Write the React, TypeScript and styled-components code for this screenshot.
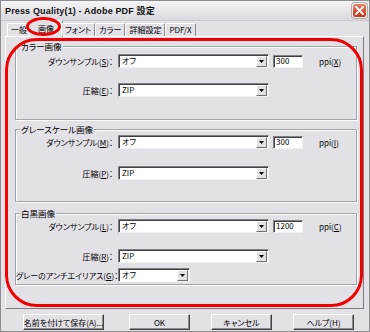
import React from 'react'
import styled, { createGlobalStyle } from 'styled-components'

const GlobalStyle = createGlobalStyle`
  body {
    margin: 0;
    background: #e2e1e6;
  }
`

const uiFont = `"Noto Sans CJK JP", "Noto Sans", sans-serif`

const Window = styled.div`
  position: relative;
  box-sizing: border-box;
  width: 370px;
  height: 332px;
  display: flex;
  flex-direction: column;
  background: #e2e1e6;
  border: 1px solid #8d8c93;
  font-family: ${uiFont};
  font-size: 8px;
  font-feature-settings: 'palt';
  color: #000;
  overflow: hidden;
`

const TitleBar = styled.div`
  height: 19px;
  flex: none;
  display: flex;
  align-items: center;
  justify-content: space-between;
  padding: 0 2px 0 4px;
  background: linear-gradient(#f6f6f8, #e6e6ea 55%, #d8d8de);
  border-bottom: 1px solid #c9c8ce;
`

const Title = styled.span`
  font-family: 'Liberation Sans', 'Noto Sans CJK JP', sans-serif;
  font-weight: bold;
  font-size: 9px;
  letter-spacing: 0.15px;
  color: #111;
`

const CloseButton = styled.div`
  width: 15px;
  height: 15px;
  box-sizing: border-box;
  border: 1px solid #f4f4f4;
  border-radius: 3px;
  background: linear-gradient(#e9876e, #d24d2f 60%, #c13d22);
  display: flex;
  align-items: center;
  justify-content: center;
  box-shadow: 0 0 0 1px #b9a7a3;
`

const TabStrip = styled.div`
  height: 15px;
  flex: none;
  display: flex;
  align-items: flex-end;
  padding-left: 6px;
  position: relative;
  z-index: 1;
`

const Tab = styled.div<{ $active?: boolean }>`
  box-sizing: border-box;
  height: ${({ $active }) => ($active ? '17px' : '13px')};
  margin: ${({ $active }) => ($active ? '0 -2px -1px' : '0')};
  padding: ${({ $active }) => ($active ? '0 8px' : '0 3px')};
  display: flex;
  align-items: center;
  background: #e2e1e6;
  border-top: 1px solid #ffffff;
  border-left: 1px solid #ffffff;
  border-right: 1px solid #8b8a90;
  border-radius: 2px 2px 0 0;
  line-height: 1;
`

const Panel = styled.div`
  margin: 0 5px 0 4px;
  padding: 3px 6px 23px 9px;
  border-top: 1px solid #ffffff;
  border-left: 1px solid #ffffff;
  border-right: 1px solid #7e7d84;
  border-bottom: 1px solid #7e7d84;
  display: flex;
  flex-direction: column;
`

const Group = styled.fieldset<{ $top: number; $bottom: number }>`
  margin: ${({ $top }) => $top}px 0 0;
  padding: 0 0 ${({ $bottom }) => $bottom}px;
  min-width: 0;
  border: 1px solid #a3a2a9;
  box-shadow: 1px 1px 0 #ffffff, inset 1px 1px 0 #ffffff;
`

const Legend = styled.legend`
  margin-left: 4px;
  padding: 0 1px;
  line-height: 12px;
  font-size: 8.5px;
  background: #e2e1e6;
`

const Row = styled.div<{ $top: number }>`
  display: flex;
  align-items: center;
  height: 14px;
  margin-top: ${({ $top }) => $top}px;
`

const Label = styled.span`
  width: 97px;
  flex: none;
  text-align: right;
  white-space: nowrap;
  margin-right: 5px;
`

const Key = styled.span`
  text-decoration: underline;
`

const SelectBox = styled.div<{ $width: number }>`
  box-sizing: border-box;
  width: ${({ $width }) => $width}px;
  height: 14px;
  flex: none;
  display: flex;
  align-items: center;
  background: #ffffff;
  border-top: 1px solid #808086;
  border-left: 1px solid #808086;
  border-right: 1px solid #f2f2f4;
  border-bottom: 1px solid #f2f2f4;
  box-shadow: inset 1px 1px 0 #404044;
`

const SelectText = styled.span`
  flex: 1;
  padding-left: 3px;
  line-height: 1;
`

const DropButton = styled.div`
  box-sizing: border-box;
  width: 11px;
  height: 11px;
  margin-right: 1px;
  display: flex;
  align-items: center;
  justify-content: center;
  background: #e2e1e6;
  border-top: 1px solid #ffffff;
  border-left: 1px solid #ffffff;
  border-right: 1px solid #6f6e74;
  border-bottom: 1px solid #6f6e74;
`

const NumberBox = styled.div`
  box-sizing: border-box;
  width: 30px;
  height: 13px;
  margin-left: 4px;
  padding-left: 2px;
  display: flex;
  align-items: center;
  background: #ffffff;
  border-top: 1px solid #808086;
  border-left: 1px solid #808086;
  border-right: 1px solid #f2f2f4;
  border-bottom: 1px solid #f2f2f4;
  box-shadow: inset 1px 1px 0 #404044;
  line-height: 1;
`

const Unit = styled.span`
  margin-left: 16px;
`

const ButtonRow = styled.div`
  display: flex;
  justify-content: space-between;
  align-items: center;
  margin-top: 5px;
  padding: 0 15px 0 22px;
`

const ButtonGroup = styled.div`
  display: flex;
  gap: 21px;
`

const Button = styled.div<{ $width: number }>`
  box-sizing: border-box;
  width: ${({ $width }) => $width}px;
  height: 16px;
  display: flex;
  align-items: center;
  justify-content: center;
  background: #e2e1e6;
  border-top: 1px solid #ffffff;
  border-left: 1px solid #ffffff;
  border-right: 1px solid #404044;
  border-bottom: 1px solid #404044;
  box-shadow: inset -1px -1px 0 #8d8c93;
  white-space: nowrap;
`

const RedFrame = styled.div`
  position: absolute;
  left: 4px;
  top: 37px;
  width: 358px;
  height: 269px;
  box-sizing: border-box;
  border: 3px solid #f00000;
  border-radius: 32px;
  pointer-events: none;
`

const RedRing = styled.div`
  position: absolute;
  left: 25px;
  top: 16px;
  width: 35px;
  height: 19px;
  box-sizing: border-box;
  border: 3px solid #f00000;
  border-radius: 50%;
  pointer-events: none;
  z-index: 2;
`

function Mnemonic({ text, k }: { text: string; k: string }) {
  return (
    <Label>
      {text}(<Key>{k}</Key>)：
    </Label>
  )
}

function Select({ value, width }: { value: string; width: number }) {
  return (
    <SelectBox $width={width}>
      <SelectText>{value}</SelectText>
      <DropButton>
        <svg width="5" height="3" viewBox="0 0 5 3">
          <path d="M0 0h5L2.5 3z" fill="#000" />
        </svg>
      </DropButton>
    </SelectBox>
  )
}

function DownsampleRow({ k, ppi, unitKey, top }: { k: string; ppi: string; unitKey: string; top: number }) {
  return (
    <Row $top={top}>
      <Mnemonic text="ダウンサンプル" k={k} />
      <Select value="オフ" width={151} />
      <NumberBox>{ppi}</NumberBox>
      <Unit>
        ppi(<Key>{unitKey}</Key>)
      </Unit>
    </Row>
  )
}

function CompressRow({ k, top }: { k: string; top: number }) {
  return (
    <Row $top={top}>
      <Mnemonic text="圧縮" k={k} />
      <Select value="ZIP" width={151} />
    </Row>
  )
}

const tabs = ['一般', '画像', 'フォント', 'カラー', '詳細設定', 'PDF/X']

export default function App() {
  return (
    <>
      <GlobalStyle />
      <Window>
        <TitleBar>
          <Title>Press Quality(1) - Adobe PDF 設定</Title>
          <CloseButton>
            <svg width="9" height="9" viewBox="0 0 9 9">
              <path d="M1 1l7 7M8 1L1 8" stroke="#fff" strokeWidth="1.8" strokeLinecap="square" />
            </svg>
          </CloseButton>
        </TitleBar>
        <TabStrip>
          {tabs.map((t) => (
            <Tab key={t} $active={t === '画像'}>
              {t}
            </Tab>
          ))}
        </TabStrip>
        <Panel>
          <Group $top={0} $bottom={22}>
            <Legend>カラー画像</Legend>
            <DownsampleRow k="S" ppi="300" unitKey="X" top={2} />
            <CompressRow k="E" top={15} />
          </Group>
          <Group $top={3} $bottom={21}>
            <Legend>グレースケール画像</Legend>
            <DownsampleRow k="M" ppi="300" unitKey="I" top={0} />
            <CompressRow k="P" top={17} />
          </Group>
          <Group $top={5} $bottom={2}>
            <Legend>白黒画像</Legend>
            <DownsampleRow k="L" ppi="1200" unitKey="C" top={0} />
            <CompressRow k="R" top={16} />
            <Row $top={5}>
              <Mnemonic text="グレーのアンチエイリアス" k="G" />
              <Select value="オフ" width={72} />
            </Row>
          </Group>
        </Panel>
        <ButtonRow>
          <Button $width={81}>名前を付けて保存(A)...</Button>
          <ButtonGroup>
            <Button $width={61}>OK</Button>
            <Button $width={61}>キャンセル</Button>
            <Button $width={61}>ヘルプ(H)</Button>
          </ButtonGroup>
        </ButtonRow>
        <RedFrame />
        <RedRing />
      </Window>
    </>
  )
}
